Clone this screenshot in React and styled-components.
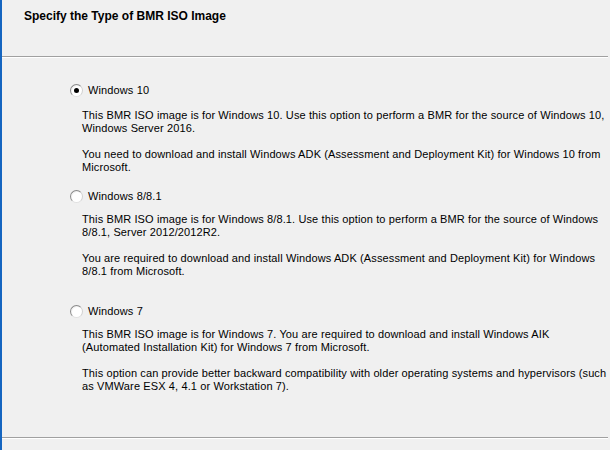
import React, { useState } from 'react';
import styled, { createGlobalStyle } from 'styled-components';

const GlobalStyle = createGlobalStyle`
  html, body {
    margin: 0;
    padding: 0;
    background: #f0f0f0;
  }
`

const options = [
  {
    id: 'win10',
    label: 'Windows 10',
    top: 0,
    labelGap: 12,
    paras: [
      ['This BMR ISO image is for Windows 10. Use this option to perform a BMR for the source of Windows 10,', 'Windows Server 2016.'],
      ['You need to download and install Windows ADK (Assessment and Deployment Kit) for Windows 10 from', 'Microsoft.'],
    ],
  },
  {
    id: 'win8',
    label: 'Windows 8/8.1',
    top: 2,
    labelGap: 10,
    paras: [
      ['This BMR ISO image is for Windows 8/8.1. Use this option to perform a BMR for the source of Windows', '8/8.1, Server 2012/2012R2.'],
      ['You are required to download and install Windows ADK (Assessment and Deployment Kit) for Windows', '8/8.1 from Microsoft.'],
    ],
  },
  {
    id: 'win7',
    label: 'Windows 7',
    top: 13,
    labelGap: 10,
    paras: [
      ['This BMR ISO image is for Windows 7. You are required to download and install Windows AIK', '(Automated Installation Kit) for Windows 7 from Microsoft.'],
      ['This option can provide better backward compatibility with older operating systems and hypervisors (such', 'as VMWare ESX 4, 4.1 or Workstation 7).'],
    ],
  },
]

const App = () => {
  const [selected, setSelected] = useState('win10')

  return <Window>
    <GlobalStyle />
    <Header>
      <Title>Specify the Type of BMR ISO Image</Title>
    </Header>
    <Separator />
    <Body>
      {options.map(opt => (
        <Option key={opt.id} top={opt.top}>
          <RadioRow gap={opt.labelGap} onClick={() => setSelected(opt.id)}>
            <Radio checked={selected === opt.id} />
            <Label>{opt.label}</Label>
          </RadioRow>
          {opt.paras.map((lines, i) => (
            <Para key={i}>
              {lines.map((l, j) => <Line key={j}>{l}</Line>)}
            </Para>
          ))}
        </Option>
      ))}
    </Body>
    <Separator />
    <Footer />
  </Window>
};

const Window = styled.div`
  width: 610px;
  height: 450px;
  box-sizing: border-box;
  border-left: 2px solid #1565c0;
  background: #f0f0f0;
  font-family: "Liberation Sans", Arial, sans-serif;
  font-size: 11px;
  color: #000;
  display: flex;
  flex-direction: column;
  overflow: hidden;
`

const Header = styled.div`
  height: 56px;
  padding: 9px 0 0 22px;
  box-sizing: border-box;
`

const Title = styled.div`
  font-weight: bold;
  font-size: 12px;
`

const Separator = styled.div`
  height: 1px;
  margin-right: 2px;
  background: #a0a0a0;
  border-bottom: 1px solid #fff;
`

const Body = styled.div`
  flex: 1;
  padding: 25px 0 0 68px;
  display: flex;
  flex-direction: column;
`

const Option = styled.div`
  display: flex;
  flex-direction: column;
  margin-top: ${props => props.top}px;
`

const RadioRow = styled.label`
  display: flex;
  align-items: center;
  gap: 5px;
  height: 14px;
  margin-bottom: ${props => props.gap}px;
  cursor: pointer;
`

const Radio = styled.span`
  width: 11px;
  height: 11px;
  border-radius: 50%;
  border: 1px solid #8a8a8a;
  border-right-color: #d0d0d0;
  border-bottom-color: #e0e0e0;
  background: #fff;
  box-shadow: inset 1px 1px 0 #f2f2f2;
  position: relative;
  flex-shrink: 0;

  &::after {
    content: '';
    display: ${props => props.checked ? 'block' : 'none'};
    position: absolute;
    left: 3px;
    top: 3px;
    width: 5px;
    height: 5px;
    border-radius: 50%;
    background: #000;
  }
`

const Label = styled.span`
  line-height: 14px;
  letter-spacing: 0.12px;
`

const Para = styled.div`
  padding-left: 12px;
  margin-bottom: 13px;
`

const Line = styled.div`
  line-height: 13px;
  white-space: nowrap;
  letter-spacing: 0.12px;
`

const Footer = styled.div`
  height: 11px;
`

export default App;
